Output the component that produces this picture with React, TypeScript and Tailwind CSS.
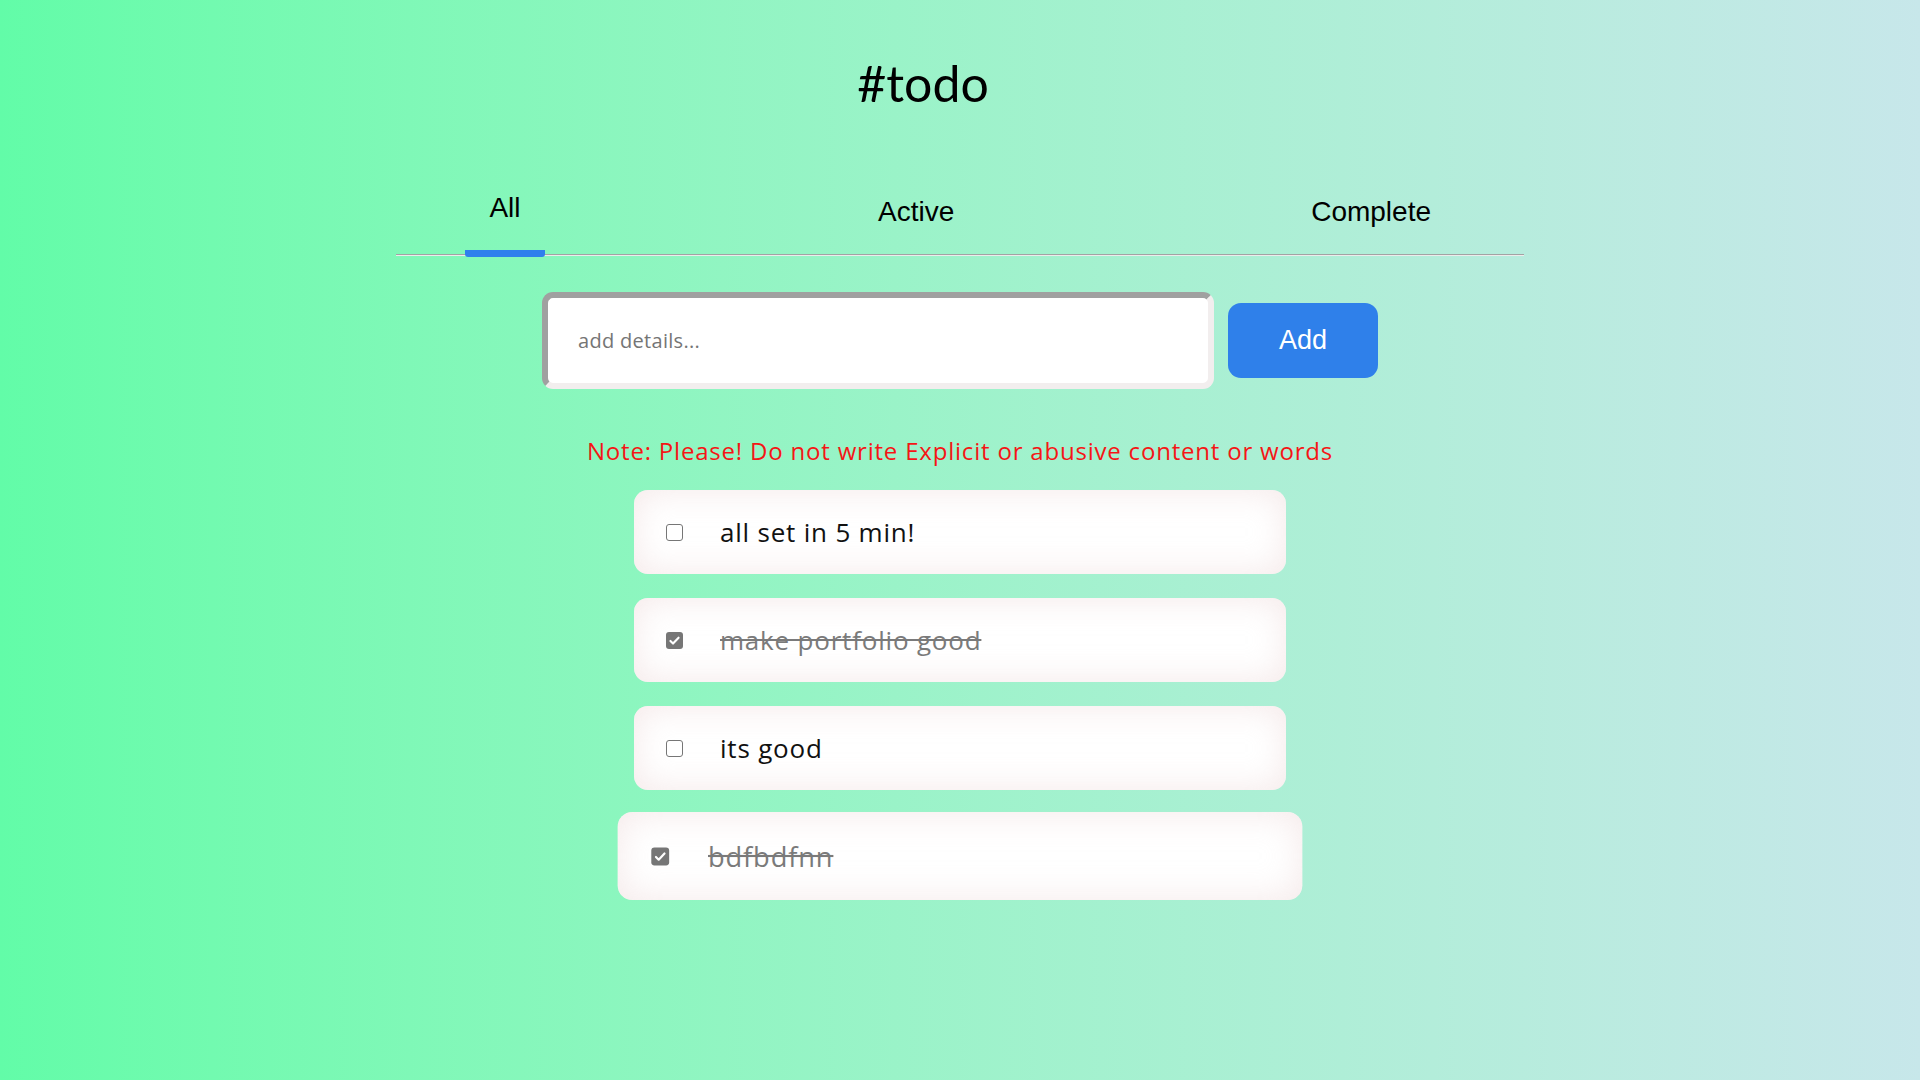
import { useState } from "react";

type Todo = {
  id: number;
  text: string;
  done: boolean;
};

const TABS = ["All", "Active", "Complete"] as const;
type Tab = (typeof TABS)[number];

const initialTodos: Todo[] = [
  { id: 1, text: "all set in 5 min!", done: false },
  { id: 2, text: "make portfolio good", done: true },
  { id: 3, text: "its good", done: false },
  { id: 4, text: "bdfbdfnn", done: true },
];

function CheckBox({ checked, onToggle }: { checked: boolean; onToggle: () => void }) {
  return (
    <button
      type="button"
      onClick={onToggle}
      className={`flex h-[17px] w-[17px] shrink-0 items-center justify-center rounded-[3px] ${
        checked ? "bg-[#767676]" : "border-[1.5px] border-[#767676] bg-white"
      }`}
    >
      {checked && (
        <svg viewBox="0 0 16 16" className="h-[13px] w-[13px]">
          <path
            d="M3 8.5l3.2 3.2L13 4.5"
            fill="none"
            stroke="white"
            strokeWidth="2.6"
            strokeLinecap="round"
            strokeLinejoin="round"
          />
        </svg>
      )}
    </button>
  );
}

function TodoRow({
  todo,
  hovered,
  onToggle,
}: {
  todo: Todo;
  hovered: boolean;
  onToggle: () => void;
}) {
  return (
    <li
      className={`flex h-[84px] w-[652px] items-center rounded-[14px] bg-white pl-[32px] shadow-[inset_0_0_34px_rgba(240,222,222,0.7)] ${
        hovered ? "scale-[1.05]" : ""
      }`}
    >
      <CheckBox checked={todo.done} onToggle={onToggle} />
      <span
        className={`ml-[37px] text-[26px] leading-[32px] tracking-[0.8px] ${
          todo.done ? "text-[#7a7a7a] line-through" : "text-[#111]"
        }`}
      >
        {todo.text}
      </span>
    </li>
  );
}

export default function App() {
  const [tab, setTab] = useState<Tab>("All");
  const [todos, setTodos] = useState<Todo[]>(initialTodos);
  const [input, setInput] = useState("");

  const visible = todos.filter((t) =>
    tab === "All" ? true : tab === "Active" ? !t.done : t.done
  );

  function addTodo() {
    const text = input.trim();
    if (!text) return;
    setTodos((prev) => [...prev, { id: Date.now(), text, done: false }]);
    setInput("");
  }

  function toggle(id: number) {
    setTodos((prev) => prev.map((t) => (t.id === id ? { ...t, done: !t.done } : t)));
  }

  return (
    <main className="flex min-h-screen flex-col items-center bg-linear-to-r from-[#62fca8] to-[#c7e7ea] font-['Open_Sans',sans-serif]">
      <h1 className="mt-[53px] w-full pr-[74px] text-center font-['Lato',sans-serif] text-[50px] leading-[60px] font-normal text-black">
        #todo
      </h1>

      <div className="w-[1128px]">
        <div className="flex h-[144px] items-start justify-between px-[69px] pt-[79px] font-['Liberation_Sans',Arial,sans-serif] text-[28px] text-black">
          {TABS.map((t) =>
            t === tab ? (
              <button
                key={t}
                type="button"
                onClick={() => setTab(t)}
                className="relative z-10 flex w-[80px] flex-col items-center"
              >
                <span className="leading-[32px]">{t}</span>
                <span className="mt-[26px] h-[7px] w-[80px] rounded-b-[3px] bg-[#2f80ed]" />
              </button>
            ) : (
              <button
                key={t}
                type="button"
                onClick={() => setTab(t)}
                className="mt-[4px] px-6 leading-[32px]"
              >
                {t}
              </button>
            )
          )}
        </div>
        <div className="-mt-[3px] h-0 border-t border-b border-t-[#a3a3a3] border-b-[#ececec]" />
      </div>

      <div className="mt-[36px] flex items-center gap-[14px]">
        <input
          value={input}
          onChange={(e) => setInput(e.target.value)}
          onKeyDown={(e) => {
            if (e.key === "Enter") addTodo();
          }}
          placeholder="add details..."
          className="h-[97px] w-[672px] rounded-[11px] border-[6px] border-t-[#a0a0a0] border-l-[#a0a0a0] border-r-[#f2eeee] border-b-[#f2eeee] bg-white pl-[30px] text-[20px] tracking-[0.3px] text-[#333] outline-none placeholder:text-[#757575]"
        />
        <button
          type="button"
          onClick={addTodo}
          className="h-[75px] w-[150px] rounded-[13px] bg-[#2f80ea] font-['Liberation_Sans',Arial,sans-serif] text-[27px] text-white"
        >
          Add
        </button>
      </div>

      <p className="mt-[47px] text-[24px] leading-[30px] tracking-[0.8px] text-[#f51616]">
        Note: Please! Do not write Explicit or abusive content or words
      </p>

      <ul className="mt-[24px] flex flex-col items-center gap-[24px] pb-[40px]">
        {visible.map((t) => (
          <TodoRow key={t.id} todo={t} hovered={t.id === 4} onToggle={() => toggle(t.id)} />
        ))}
      </ul>
    </main>
  );
}
